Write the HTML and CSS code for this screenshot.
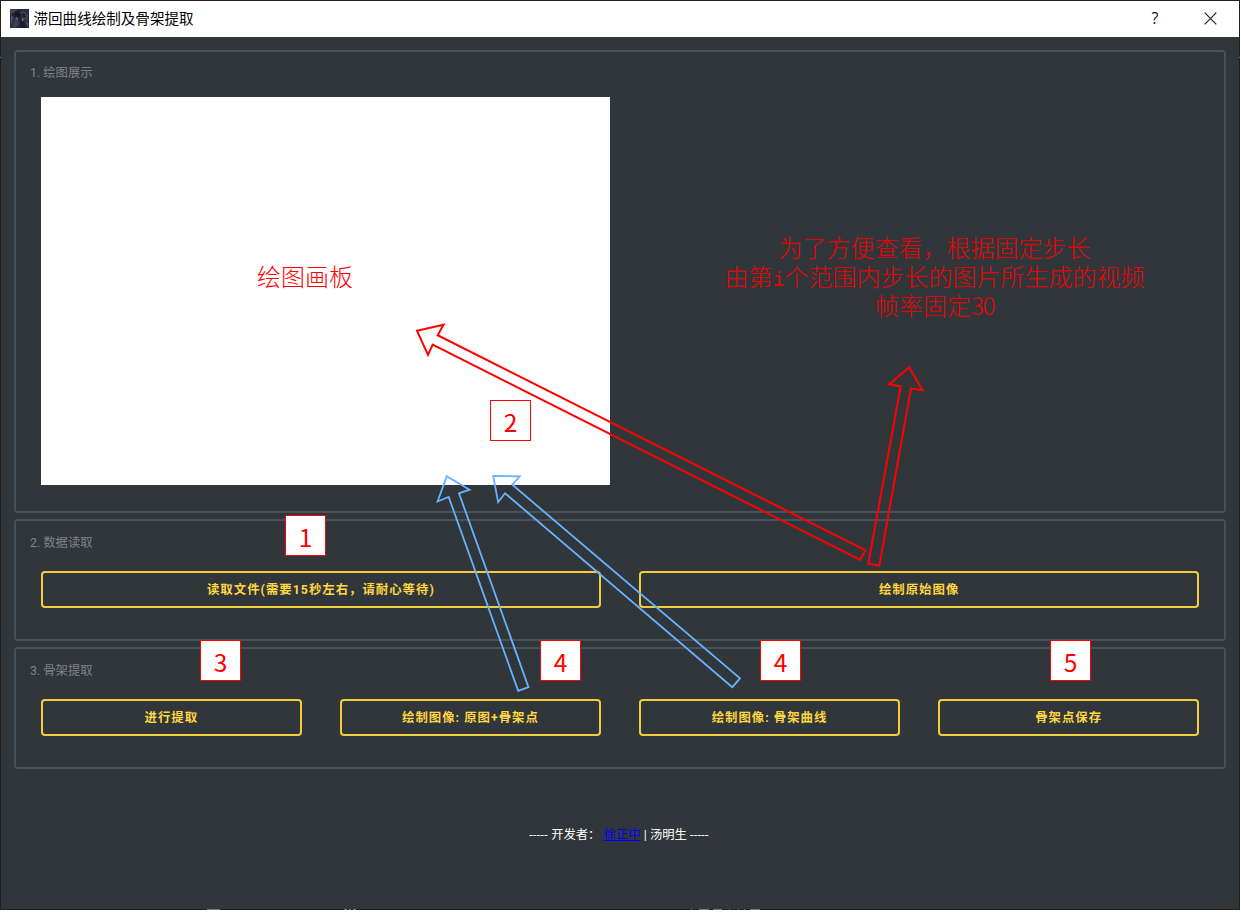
FILE: index.html
```html
<!DOCTYPE html>
<html lang="zh-CN">
<head>
<meta charset="utf-8">
<title>滞回曲线绘制及骨架提取</title>
<link rel="stylesheet" href="styles.css">
</head>
<body>
<div class="window">
  <header class="titlebar">
    <svg class="app-icon" width="19" height="19" viewBox="0 0 19 19">
      <rect width="19" height="19" fill="#272a3c"/>
      <path d="M0 0h8l-3 3-5 3z" fill="#40404f"/>
      <path d="M4 4l4-2 3 4-2 4-4-1z" fill="#171927"/>
      <path d="M10 3l4-1 4 4-1 6-4-3z" fill="#444655"/>
      <path d="M12 4l3 1 1 4-3-1z" fill="#1b1d2c"/>
      <path d="M5 8l3 2 1 5-4 4H2z" fill="#3a3e57"/>
      <path d="M6 8l2 1-1 2zM12 9l2 2-2 1z" fill="#8b8490"/>
      <path d="M10 11l4 3 2 5h-6z" fill="#1a1d30"/>
      <path d="M1 6l2 2-1 6-1 2zM15 12l3 2v4z" fill="#555566"/>
    </svg>
    <h1 class="title">滞回曲线绘制及骨架提取</h1>
    <span class="help">?</span>
    <svg class="close" width="13" height="13" viewBox="0 0 13 13"><path d="M.7.7l11.6 11.6M12.3.7L.7 12.3" stroke="#222" stroke-width="1.2"/></svg>
  </header>
  <main class="content">
    <section class="group group-plot">
      <h2 class="group-title">1. 绘图展示</h2>
      <div class="plots">
        <div class="board">绘图画板</div>
        <div class="video">为了方便查看，根据固定步长<br>由第<span class="mono">i</span>个范围内步长的图片所生成的视频<br>帧率固定<span class="num">30</span></div>
      </div>
    </section>
    <section class="group group-row">
      <h2 class="group-title">2. 数据读取</h2>
      <div class="buttons two">
        <button class="btn">读取文件(需要15秒左右，请耐心等待)</button>
        <button class="btn">绘制原始图像</button>
      </div>
    </section>
    <section class="group group-row">
      <h2 class="group-title">3. 骨架提取</h2>
      <div class="buttons four">
        <button class="btn">进行提取</button>
        <button class="btn">绘制图像: 原图+骨架点</button>
        <button class="btn">绘制图像: 骨架曲线</button>
        <button class="btn">骨架点保存</button>
      </div>
    </section>
    <footer class="footer"><span class="dash">-----</span><span>开发者：</span><a href="#">徐正中</a><span>|</span><span>汤明生</span><span class="dash">-----</span></footer>
  </main>
</div>
<svg class="arrows" width="1241" height="912" viewBox="0 0 1241 912">
  <g fill="none" stroke="#ff0000" stroke-width="2">
    <path d="M417 330.7L443.5 324.7L437.7 335.2L865.3 550.2L860.3 560L432.7 344.7L428 354.8Z"/>
    <path d="M909.2 367.3L889.2 384.3L900.7 386.2L868.3 563.7L879.3 565.6L911 388.3L922.6 390.4Z"/>
  </g>
  <g fill="none" stroke="#66b3ff" stroke-width="1.8">
    <path d="M446.8 476.2L469.6 489.7L459 493.3L528.5 687.2L518.2 690.8L448.7 497L437.6 501.5Z"/>
    <path d="M493.2 476L519.8 476.3L512.3 484.7L740 678.4L732.3 687.2L505 493.2L498.1 502.2Z"/>
  </g>
  <path d="M0 57.500h1M207 909.500h13M1239 57.500h1M344 909.500h3m2 0h2m2 0h3M691 909.500h1m7 0h10m4 0h9m7 0h1m8 0h1m5 0h1m5 0h10" stroke="#77787a" stroke-width="1"/>
</svg>
<span class="mark m1">1</span>
<span class="mark m2">2</span>
<span class="mark m3">3</span>
<span class="mark m4a">4</span>
<span class="mark m4b">4</span>
<span class="mark m5">5</span>
</body>
</html>
```
FILE: styles.css
```css
* { box-sizing: border-box; }
body {
  margin: 0;
  background: #fff;
  font-family: Roboto, "Noto Sans CJK SC", sans-serif;
}
.window {
  width: 1240px;
  height: 910px;
  border: 1px solid #231f20;
  background: #31363b;
  display: flex;
  flex-direction: column;
}
.titlebar {
  height: 36px;
  flex: none;
  background: #fff;
  display: flex;
  align-items: center;
  padding: 0 22.5px 2px 8.5px;
}
.app-icon { margin-right: 5px; }
.title {
  margin: 0;
  flex: 1;
  font: 400 14.55px/20px "Noto Sans CJK SC", sans-serif;
  color: #000;
}
.help {
  font: 400 16px/20px "Open Sans", sans-serif;
  color: #111;
  margin-right: 45px;
}
.content {
  padding: 12.500px 13px 0 13px;
  display: flex;
  flex-direction: column;
  gap: 6px;
}
.group {
  border: 2px solid #465159;
  border-radius: 4px;
  padding: 11px 25px 0;
}
.group-plot { height: 463.5px; }
.group-row { height: 122px; padding-top: 12px; }
.group-title {
  margin: 0 0 0 -11px;
  font-size: 12.35px;
  line-height: 20px;
  font-weight: 400;
  color: #7f8387;
}
.plots {
  margin-top: 14px;
  display: grid;
  grid-template-columns: 569px 588px;
  height: 388px;
}
.board, .video {
  display: flex;
  align-items: center;
  justify-content: center;
  font: 300 24px/29px "Noto Sans CJK SC", sans-serif;
  color: #ff0000;
}
.board {
  background: #fff;
  padding: 0 41px 31px 0;
}
.video {
  display: block;
  text-align: center;
  padding: 135px 0 0 61px;
  color: #e60506;
  white-space: nowrap;
}
.mono { font-family: "Liberation Mono", monospace; font-size: 20px; line-height: 1px; }
.num { letter-spacing: -1.3px; }
.buttons { display: grid; gap: 38.500px; margin-top: 18px; }
.two { grid-template-columns: 1fr 1fr; }
.four { grid-template-columns: repeat(4, 1fr); }
.btn {
  height: 37px;
  padding: 0;
  border: 2px solid #f2cd3e;
  border-radius: 4px;
  background: transparent;
  color: #ffd740;
  font: 700 12.4px/20px Roboto, "Noto Sans CJK SC", sans-serif;
  letter-spacing: 1px;
}
.footer {
  display: flex;
  justify-content: center;
  margin: 50px 2px 0 0;
  font-size: 12.3px;
  line-height: 20px;
  color: #fff;
  gap: 3.2px;
}
.footer a { color: #0000ff; }
.dash { letter-spacing: .35px; }
.arrows {
  position: absolute;
  left: 0;
  top: 0;
}
.mark {
  position: absolute;
  width: 41px;
  height: 41px;
  border: 1px solid #ff0000;
  background: #fff;
  color: #ff0000;
  font: 400 24.5px/41px "Noto Sans CJK SC", sans-serif;
  text-align: center;
}
.m1 { left: 285px; top: 515px; }
.m2 { left: 490px; top: 400px; }
.m3 { left: 200px; top: 640px; }
.m4a { left: 540px; top: 640px; }
.m4b { left: 760px; top: 640px; }
.m5 { left: 1050px; top: 640px; }
```
